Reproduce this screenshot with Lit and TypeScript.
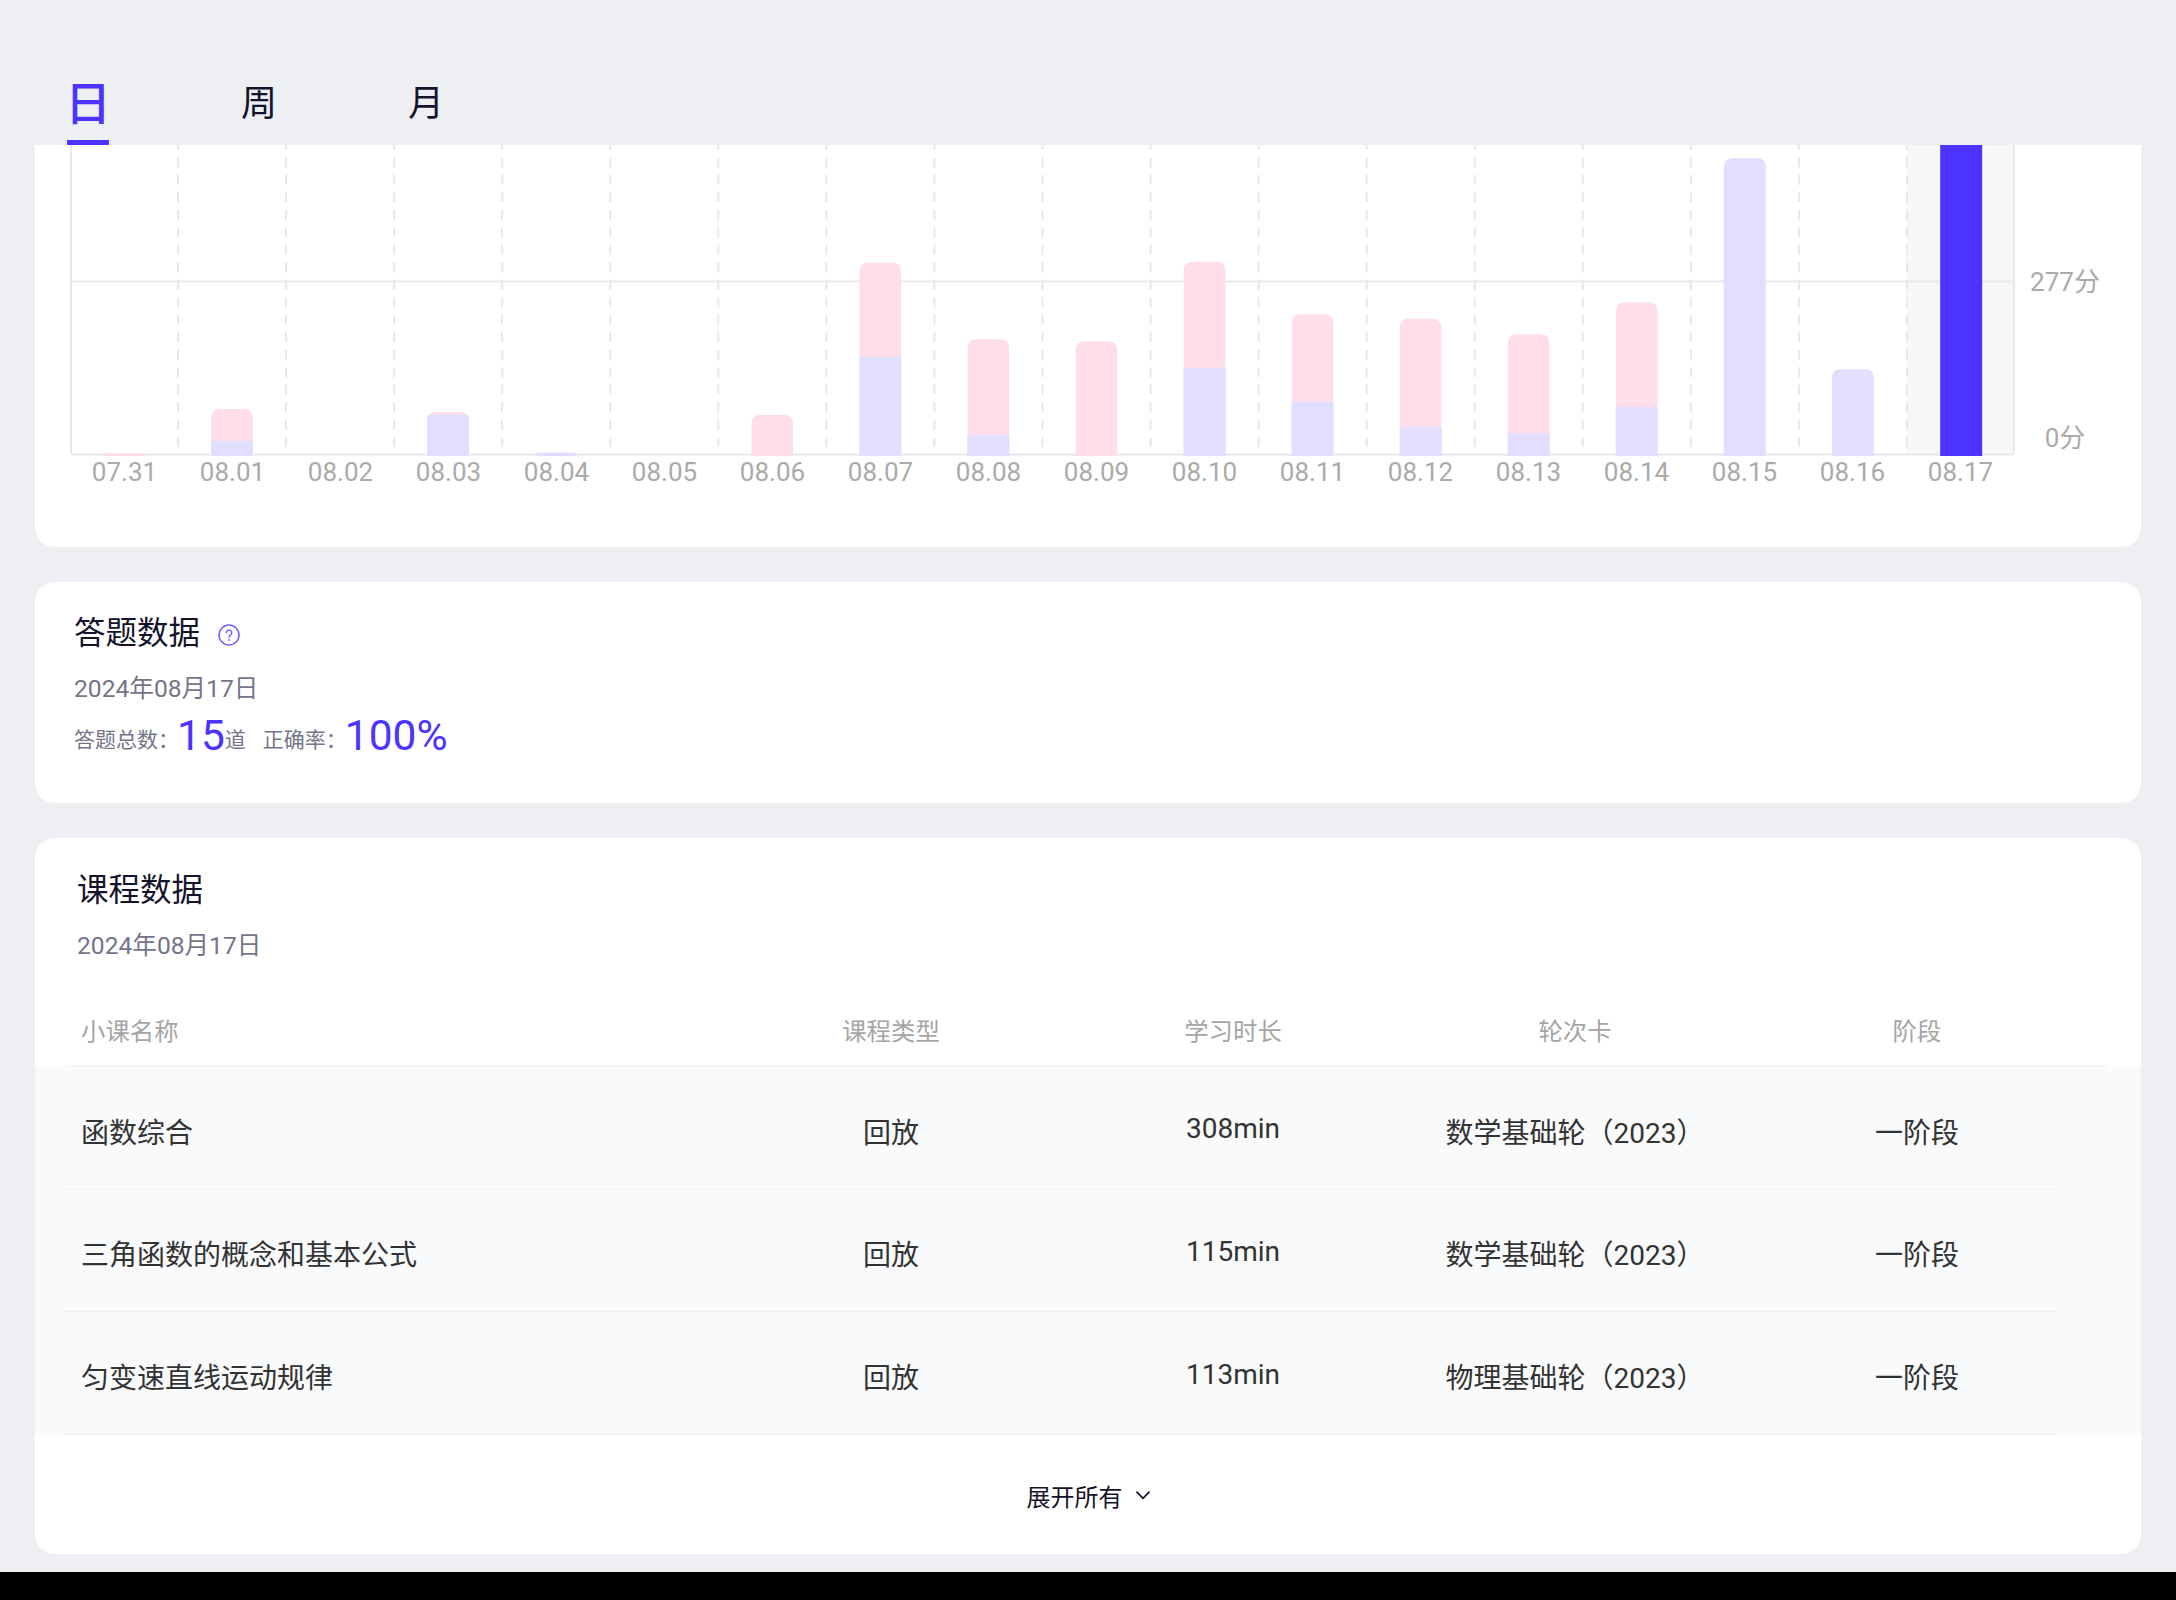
import { LitElement, html, css, svg } from "lit";
import { customElement } from "lit/decorators.js";

const BASE = 311; // plot bottom, in plot coordinates
const OFFSET = 145; // page y of the top of the plot
const STEP = 108.06; // width of one day on the plot

interface Day { d: string; pink?: number; lav?: number; }
// tops are page y coordinates measured against the plot
const days: Day[] = [
  { d: "07.31", pink: 453.6 },
  { d: "08.01", pink: 409, lav: 441 },
  { d: "08.02" },
  { d: "08.03", pink: 412, lav: 414.6 },
  { d: "08.04", lav: 452.5 },
  { d: "08.05" },
  { d: "08.06", pink: 415 },
  { d: "08.07", pink: 262.7, lav: 356.7 },
  { d: "08.08", pink: 339.3, lav: 435 },
  { d: "08.09", pink: 341.3 },
  { d: "08.10", pink: 261.7, lav: 367.7 },
  { d: "08.11", pink: 314.3, lav: 401.7 },
  { d: "08.12", pink: 318.7, lav: 426.7 },
  { d: "08.13", pink: 334.3, lav: 433.3 },
  { d: "08.14", pink: 302.3, lav: 406.7 },
  { d: "08.15", lav: 158.3 },
  { d: "08.16", lav: 369.3 },
  { d: "08.17" },
];

const courses = [
  ["函数综合", "回放", "308min", "数学基础轮（2023）", "一阶段"],
  ["三角函数的概念和基本公式", "回放", "115min", "数学基础轮（2023）", "一阶段"],
  ["匀变速直线运动规律", "回放", "113min", "物理基础轮（2023）", "一阶段"],
];

function topRounded(x: number, y: number, w: number, r: number) {
  const h = BASE - y;
  const rr = Math.min(r, h);
  return `M${x} ${BASE}V${y + rr}Q${x} ${y} ${x + rr} ${y}H${x + w - rr}Q${x + w} ${y} ${x + w} ${y + rr}V${BASE}Z`;
}

@customElement("app-root")
export class AppRoot extends LitElement {
  static styles = css`
    :host {
      display: block;
      width: 2176px;
      height: 1600px;
      background: #eeeff3;
      font-family: Roboto, "Noto Sans CJK SC", sans-serif;
      color: #14132b;
    }
    .page { display: flex; flex-direction: column; height: 1600px; }
    .tabs {
      height: 145px;
      display: flex;
      align-items: flex-end;
      gap: 131px;
      padding-left: 66px;
      box-sizing: border-box;
      flex: none;
    }
    .tab {
      width: 36px;
      display: flex;
      flex-direction: column;
      align-items: center;
      font-size: 36px;
      line-height: 52px;
      padding-bottom: 15px;
    }
    .tab.on {
      width: 44px;
      font-size: 46px;
      font-weight: 500;
      line-height: 60px;
      color: #4d33ff;
      padding-bottom: 0;
    }
    .tab .mark { width: 42px; height: 5px; background: #4d33ff; border-radius: 1px; margin-top: 6px; }
    .card {
      margin: 0 35px;
      background: #fff;
      border-radius: 20px;
      flex: none;
      box-sizing: border-box;
    }
    .card.chart {
      border-radius: 0 0 20px 20px;
      height: 402px;
      display: flex;
      padding-left: 35px;
    }
    .plot { width: 1945px; flex: none; }
    .plot svg { display: block; }
    .xlabels {
      display: grid;
      grid-template-columns: repeat(18, 108px);
      margin-left: 0.5px;
      font-size: 26px;
      line-height: 33px;
      color: #aaaaaa;
      text-align: center;
    }
    .ylabels {
      width: 100px;
      flex: none;
      display: flex;
      flex-direction: column;
      gap: 126px;
      padding-top: 122px;
      font-size: 26px;
      line-height: 30px;
      color: #aaaaaa;
      text-align: center;
    }
    .answers { margin-top: 35px; height: 221px; padding: 30px 0 0 39px; }
    .courses { margin-top: 35px; height: 716px; padding-top: 31px; display: flex; flex-direction: column; }
    .title { font-size: 31.5px; line-height: 44px; color: #14132b; display: flex; align-items: center; }
    .help { margin-left: 18px; margin-top: 2px; display: block; }
    .date { font-size: 24.6px; line-height: 34px; color: #75748a; margin-top: 16px; }
    .stats { display: flex; align-items: flex-end; font-size: 21px; color: #75748a; line-height: 36px; margin-top: 8px; }
    .num { font-size: 42.5px; line-height: 44px; color: #4d33ff; margin: 0 0 0 -2px; }
    .stats .rate { margin-left: 17px; }
    .courses .head { padding-left: 42px; }
    .thead {
      margin: 33px 0 0 30px;
      width: 2044px;
      height: 71px;
      box-sizing: border-box;
      border-bottom: 2px solid #f6f7f9;
      display: grid;
      grid-template-columns: 655px repeat(4, 342px);
      align-items: center;
      font-size: 24.4px;
      color: #a5a5a5;
      text-align: center;
      padding-bottom: 2px;
    }
    .thead > :first-child, .cells > :first-child { text-align: left; padding-left: 16px; }
    .row { background: #f9fafc; padding-left: 30px; height: 122.67px; box-sizing: border-box; }
    .cells {
      width: 1991px;
      height: 100%;
      box-sizing: border-box;
      border-bottom: 1px solid #f0f1f5;
      display: grid;
      grid-template-columns: 655px repeat(4, 342px);
      align-items: center;
      font-size: 28px;
      color: #333;
      text-align: center;
      white-space: nowrap;
    }
    .cjk { padding-top: 6px; }
    .min { padding-top: 2px; }
    .more {
      flex: 1;
      display: flex;
      align-items: center;
      justify-content: center;
      gap: 13px;
      font-size: 24px;
      color: #14132b;
      padding-top: 2px;
    }
    .black { flex: none; height: 28px; margin-top: auto; background: #000; }
  `;

  private plot() {
    const W = 1945;
    const dashes = [];
    for (let k = 1; k < 18; k++) {
      const x = 108 + STEP * (k - 1);
      dashes.push(svg`<line x1=${x} x2=${x} y1="-5.2" y2="302" stroke="#e8e8e8" stroke-width="2" stroke-dasharray="10 7.5"></line>`);
    }
    const barX = (i: number) => 33.15 + STEP * i;
    const bars = days.map((day, i) => {
      const x = barX(i);
      const out = [];
      if (day.pink !== undefined) out.push(svg`<path d=${topRounded(x, day.pink - OFFSET, 41.5, 9)} fill="#ffdeea"></path>`);
      if (day.lav !== undefined) {
        // lavender alone is rounded; just below a pink cap it has a slight corner
        const r = day.pink === undefined ? 9 : day.lav - day.pink < 6 ? 3 : 0;
        out.push(svg`<path d=${topRounded(x - 0.25, day.lav - OFFSET, 42, r)} fill="#e1deff"></path>`);
      }
      return out;
    });
    return html`<svg width=${W} height=${BASE} viewBox="0 0 ${W} ${BASE}">
      <rect x="1836.5" y="0" width="107.5" height="309" fill="#f7f7f7"></rect>
      <line x1="1" x2="1944" y1="136.5" y2="136.5" stroke="#e9e9e9" stroke-width="2"></line>
      ${dashes}
      <path d="M1 0V306.5Q1 309.5 4 309.5H1941Q1944 309.5 1944 306.5V0" fill="none" stroke="#e8e8e8" stroke-width="2"></path>
      ${bars}
      <rect x=${barX(17)} y="0" width="42" height=${BASE} fill="#4d33ff"></rect>
    </svg>`;
  }

  render() {
    return html`<div class="page">
      <div class="tabs">
        <div class="tab on">日<div class="mark"></div></div>
        <div class="tab">周</div>
        <div class="tab">月</div>
      </div>

      <section class="card chart">
        <div class="plot">
          ${this.plot()}
          <div class="xlabels">${days.map((d) => html`<span>${d.d}</span>`)}</div>
        </div>
        <div class="ylabels"><span>277分</span><span>0分</span></div>
      </section>

      <section class="card answers">
        <div class="title">答题数据
          <svg class="help" width="22" height="22" viewBox="0 0 22 22" fill="none" stroke="#6f62ff" stroke-width="1.5">
            <circle cx="11" cy="11" r="10"></circle>
            <path d="M8.3 8.7a2.7 2.7 0 1 1 4.2 2.3c-1 .65-1.5 1.1-1.5 2.3" stroke-linecap="round"></path>
            <circle cx="11" cy="16" r="0.9" fill="#6f62ff" stroke="none"></circle>
          </svg>
        </div>
        <div class="date">2024年08月17日</div>
        <div class="stats">
          <span>答题总数：</span><span class="num">15</span><span>道</span>
          <span class="rate">正确率：</span><span class="num">100%</span>
        </div>
      </section>

      <section class="card courses">
        <div class="head">
          <div class="title">课程数据</div>
          <div class="date">2024年08月17日</div>
        </div>
        <div class="thead">
          <span>小课名称</span><span>课程类型</span><span>学习时长</span><span>轮次卡</span><span>阶段</span>
        </div>
        ${courses.map((c) => html`<div class="row"><div class="cells">
          <span class="cjk">${c[0]}</span>
          <span class="cjk">${c[1]}</span>
          <span class="min">${c[2]}</span>
          <span class="cjk">${c[3]}</span>
          <span class="cjk">${c[4]}</span>
        </div></div>`)}
        <div class="more">展开所有
          <svg width="14" height="9" viewBox="0 0 14 9" fill="none" stroke="#14132b" stroke-width="1.7" stroke-linecap="round" stroke-linejoin="round"><path d="M1 1.2L7 7.4L13 1.2"></path></svg>
        </div>
      </section>

      <div class="black"></div>
    </div>`;
  }
}
